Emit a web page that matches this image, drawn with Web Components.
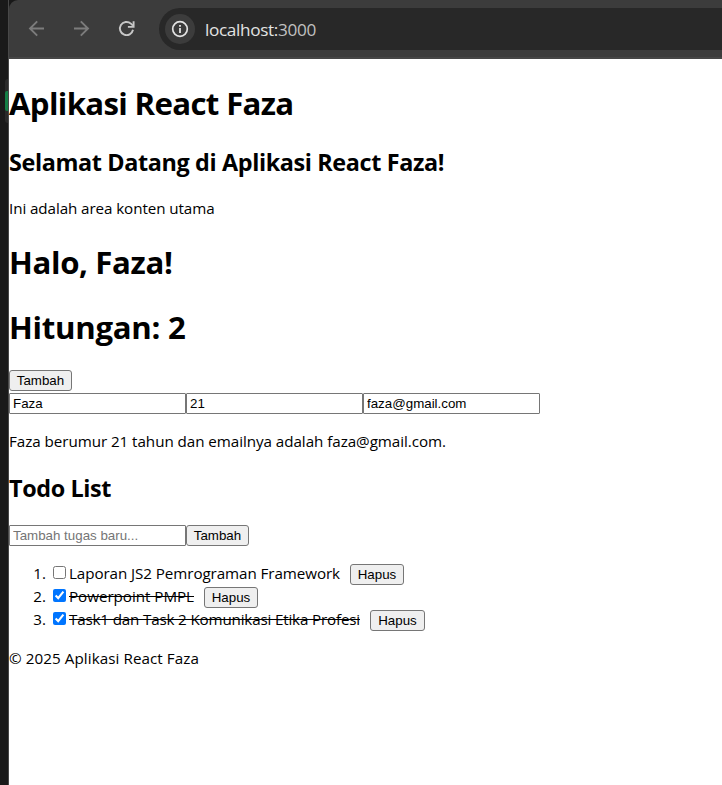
<!DOCTYPE html>
<html lang="id">
<head>
<meta charset="utf-8">
<title>Aplikasi React Faza</title>
<style>
html,body{margin:0;height:100%;overflow:hidden;background:#fff}
body{font-family:"Open Sans","Noto Sans",sans-serif;color:#000}
</style>
</head>
<body>
<browser-window>
  <browser-toolbar slot="toolbar"></browser-toolbar>
  <react-app></react-app>
</browser-window>
<script>
const define = (name, html, setup) => customElements.define(name, class extends HTMLElement {
  connectedCallback() {
    if (this.shadowRoot) return;
    this.attachShadow({mode: 'open'}).innerHTML = html;
    if (setup) setup.call(this, this.shadowRoot);
  }
});

/* Text run whose tracking is tuned so that it spans the given width. */
define('fit-text', `<style>:host{display:inline-block;white-space:pre;text-decoration:inherit}</style><span><slot></slot></span>`, function (root) {
  const target = parseFloat(this.getAttribute('width'));
  const span = root.querySelector('span');
  const n = this.textContent.length;
  const w = span.getBoundingClientRect().width;
  span.style.letterSpacing = ((target - w) / n).toFixed(4) + 'px';
});

define('app-heading', `<style>
:host{display:block;height:32px;margin:0 0 20px}
:host([level="1"]){height:43px;margin:0 0 22px}
h1,h2{margin:0;font-weight:700;white-space:nowrap}
h1{font-size:31.2px;line-height:45px}
h2{font-size:23.4px;line-height:33px}
</style><div></div>`, function (root) {
  const tag = 'h' + this.getAttribute('level');
  root.querySelector('div').innerHTML = `<${tag}><fit-text width="${this.getAttribute('width')}">${this.textContent}</fit-text></${tag}>`;
});

define('app-text', `<style>:host{display:block;height:21px;font-size:15.2px;line-height:22px;white-space:nowrap}p{margin:0}</style><p><slot></slot></p>`);

define('app-button', `<style>
:host{display:block}
button{box-sizing:border-box;display:block;width:100%;height:21px;margin:0;padding:0;border:1px solid #767676;border-radius:3px;background:#efefef;color:#000;font:13.333px/17px "Liberation Sans",Arial,sans-serif;text-align:center}
</style><button type="button"><slot></slot></button>`);

define('app-input', `<style>
:host{display:block;width:177px}
input{box-sizing:border-box;display:block;width:177px;height:21px;margin:0;padding:1px 3px;border:1px solid #767676;border-radius:1px;background:#fff;color:#000;font:13.333px "Liberation Sans",Arial,sans-serif;outline:0}
input::placeholder{color:#757575}
</style><input type="text">`, function (root) {
  const input = root.querySelector('input');
  input.value = this.getAttribute('value') || '';
  input.placeholder = this.getAttribute('placeholder') || '';
});

define('todo-item', `<style>
:host{display:grid;grid-template-columns:40px 20px auto auto;justify-content:start;height:23px;font-size:15.2px;line-height:20px}
.num{text-align:right;padding-right:3px}
input{width:13px;height:13px;margin:3px 3px 0 4px;accent-color:#0075ff}
.done{text-decoration:line-through;text-decoration-thickness:1px}
app-button{margin:1px 0 0 10px}
</style><span class="num"></span><input type="checkbox"><span class="label"></span><app-button>Hapus</app-button>`, function (root) {
  const done = this.hasAttribute('done');
  root.querySelector('.num').textContent = this.getAttribute('num') + '.';
  root.querySelector('input').checked = done;
  const label = root.querySelector('.label');
  label.innerHTML = `<fit-text width="${this.getAttribute('width')}">${this.textContent}</fit-text>`;
  if (done) label.firstChild.classList.add('done');
  root.querySelector('app-button').style.width = (this.getAttribute('button') || 54) + 'px';
});

define('react-app', `<style>
:host{display:block;padding-top:22px}
.row{display:flex;height:21px}
.count{margin-bottom:2px}
.form{margin-bottom:16px}
.list{margin:17px 0 15px}
.w{width:63px}
</style>
<app-heading level="1" width="284.5">Aplikasi React Faza</app-heading>
<app-heading level="2" width="435" style="margin-bottom:19px">Selamat Datang di Aplikasi React Faza!</app-heading>
<app-text style="margin-bottom:22px"><fit-text width="205.5">Ini adalah area konten utama</fit-text></app-text>
<app-heading level="1" width="163.5">Halo, Faza!</app-heading>
<app-heading level="1" width="176.5">Hitungan: 2</app-heading>
<div class="row count"><app-button class="w">Tambah</app-button></div>
<div class="row form"><app-input value="Faza"></app-input><app-input value="21"></app-input><app-input value="faza@gmail.com"></app-input></div>
<app-text style="margin-bottom:21px"><fit-text width="437">Faza berumur 21 tahun dan emailnya adalah faza@gmail.com.</fit-text></app-text>
<app-heading level="2" width="102" style="margin-bottom:21px">Todo List</app-heading>
<div class="row"><app-input placeholder="Tambah tugas baru..."></app-input><app-button class="w">Tambah</app-button></div>
<div class="list">
<todo-item num="1" width="271">Laporan JS2 Pemrograman Framework</todo-item>
<todo-item num="2" width="125" done>Powerpoint PMPL</todo-item>
<todo-item num="3" width="291" button="55" done>Task1 dan Task 2 Komunikasi Etika Profesi</todo-item>
</div>
<app-text><fit-text width="190">© 2025 Aplikasi React Faza</fit-text></app-text>`);

define('browser-toolbar', `<style>
:host{box-sizing:border-box;display:flex;align-items:flex-start;height:59px;background:#3c3c3c;border-bottom:2px solid #464646;border-top-left-radius:9px;padding:8px 0 0 17px}
svg{display:block;fill:none}
.nav{width:20px;height:20px;margin:10px 25px 0 0;stroke:#7c7c7c;stroke-width:1.9}
.reload{stroke:#c7c7c7;stroke-width:1.9;margin:11px 22px 0 1px}
.bar{display:flex;align-items:center;flex:1;height:42px;background:#282828;border-radius:21px 0 0 21px;padding-left:6px}
.info{display:grid;place-items:center;width:30px;height:30px;border-radius:50%;background:#3c3c3c;margin-right:10px}
.url{font-size:17.2px;line-height:42px;color:#e3e3e3;display:flex;padding-top:1px}
.port{color:#c0c0c0}
</style>
<svg class="nav" viewBox="0 0 20 20"><path d="M18 10.5H4.5M11.2 3.3l-7.2 7.2 7.2 7.2"/></svg>
<svg class="nav" viewBox="0 0 20 20"><path d="M3 10.5h13.5M9.8 3.3l7.2 7.2-7.2 7.2"/></svg>
<svg class="nav reload" viewBox="0 0 20 20"><path d="M16 10.8a6.6 6.6 0 1 1-2.1-6.2L16 6.7"/><path d="M16.6 2.2v5.7h-5.7"/></svg>
<div class="bar"><span class="info"><svg width="18" height="18" viewBox="0 0 18 18"><circle cx="9" cy="9" r="7.3" stroke="#e3e3e3" stroke-width="1.7"/><path d="M9 8v5M9 5v1.8" stroke="#e3e3e3" stroke-width="1.8"/></svg></span>
<span class="url"><fit-text width="73">localhost:</fit-text><fit-text width="38" class="port">3000</fit-text></span></div>`);

define('browser-window', `<style>
:host{display:grid;grid-template-columns:9px 1fr;width:722px;height:785px;background:#181818}
.edge{box-sizing:border-box;border-right:1px solid #484848;background:#1a1a1a;padding-top:79px}
.tab{box-sizing:border-box;width:3px;height:44px;margin-left:5px;padding-top:12px;border-radius:4px 0 0 4px;background:#2a2a2a}
.mark{height:20px;background:#147f46;border-radius:2px 0 0 2px}
.window{min-width:0;display:flex;flex-direction:column}
.page{flex:1;background:#fff}
</style>
<div class="edge"><div class="tab"><div class="mark"></div></div></div>
<div class="window"><slot name="toolbar"></slot><div class="page"><slot></slot></div></div>`);
</script>
</body>
</html>
